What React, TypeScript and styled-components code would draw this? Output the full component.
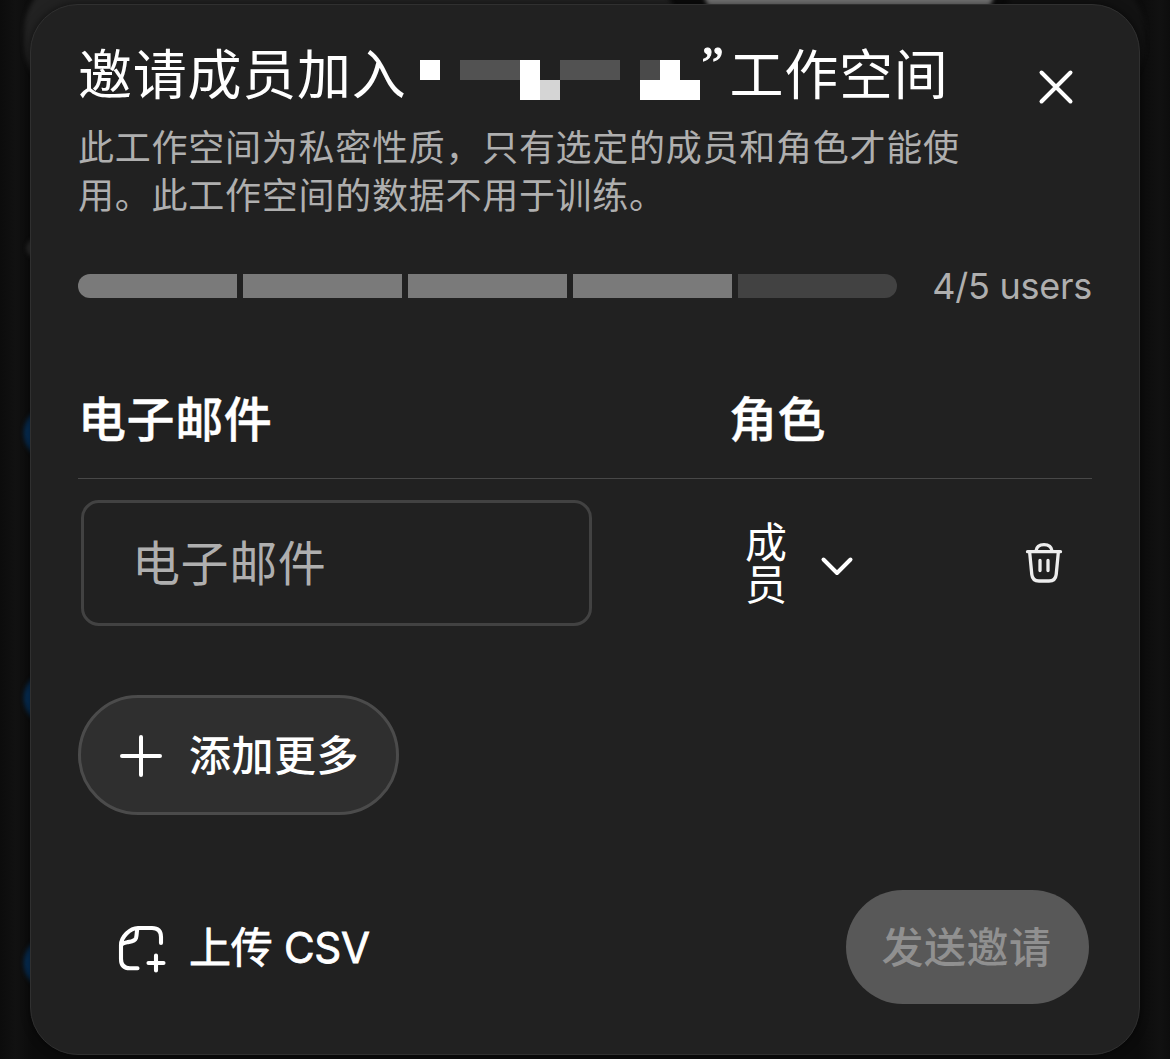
import React from 'react';
import styled, { createGlobalStyle } from 'styled-components';

const GlobalStyle = createGlobalStyle`
  * { box-sizing: border-box; }
  body {
    margin: 0;
    background: #0e0e0e;
    overflow: hidden;
    font-family: Inter, "Noto Sans CJK SC", sans-serif;
    color: #fff;
  }
  button, input { font: inherit; color: inherit; margin: 0; }
`;

const Page = styled.div`
  position: relative;
  width: 1170px;
  height: 1059px;
  padding: 4px 30px;
  overflow: hidden;
  background: linear-gradient(90deg, #0c0c0c 0, #111 16px, #0b0b0b 32px, #0b0b0b 1138px, #111 1160px, #0d0d0d 1170px);
`;

const Glow = styled.div<{ $x: number; $y: number; $w: number; $h: number; $color: string; $blur?: number }>`
  position: absolute;
  left: ${p => p.$x}px;
  top: ${p => p.$y}px;
  width: ${p => p.$w}px;
  height: ${p => p.$h}px;
  border-radius: ${p => Math.min(p.$h / 2, 60)}px;
  background: ${p => p.$color};
  filter: blur(${p => p.$blur ?? 2}px);
`;

const Dialog = styled.section`
  position: relative;
  display: flex;
  flex-direction: column;
  height: 1051px;
  padding: 34px 47px 50px;
  border: 1px solid #303030;
  border-radius: 48px;
  background: #212121;
  box-shadow: 0 0 8px rgba(0, 0, 0, 0.55);
`;

const Header = styled.header`
  display: flex;
  justify-content: space-between;
  height: 181px;
`;

const Title = styled.h1`
  display: flex;
  align-items: center;
  height: 74px;
  margin: 0;
  font-size: 54px;
  font-weight: 400;
  line-height: 72px;
  letter-spacing: 0.75px;
  white-space: nowrap;
`;

const Quote = styled.span`
  align-self: flex-start;
  width: 30px;
  padding-left: 2px;
  font-family: "Liberation Serif", serif;
  font-size: 50px;
  line-height: 50px;
  letter-spacing: 0;
  -webkit-text-stroke: 1px #fff;
`;

const Mosaic = styled.span`
  display: grid;
  grid-template-columns: repeat(14, 20px);
  grid-template-rows: 20px 20px;
  margin: 8px 0 0 13px;
`;

const Tile = styled.span<{ $row: number; $col: number; $span?: number; $tone: string }>`
  grid-row: ${p => p.$row};
  grid-column: ${p => p.$col} / span ${p => p.$span ?? 1};
  background: ${p => p.$tone};
`;

const Description = styled.p`
  width: 900px;
  margin: 11px 0 0;
  color: #afafaf;
  font-size: 36px;
  font-weight: 400;
  line-height: 48px;
  letter-spacing: 0.74px;
`;

const IconButton = styled.button`
  display: flex;
  align-items: center;
  justify-content: center;
  width: 60px;
  height: 60px;
  padding: 0;
  border: 0;
  background: none;
`;

const CloseButton = styled(IconButton)`
  margin: 18px 6px 0 0;
`;

const Usage = styled.div`
  display: flex;
  align-items: center;
  justify-content: space-between;
  height: 48px;
  margin-top: 42px;
`;

const Meter = styled.div`
  display: grid;
  flex: none;
  grid-template-columns: repeat(5, 159px);
  gap: 6px;
  height: 24px;
  overflow: hidden;
  border-radius: 12px;
`;

const Segment = styled.span<{ $used: boolean }>`
  background: ${p => (p.$used ? '#7a7a7a' : '#424242')};
`;

const UsageLabel = styled.span`
  color: #afafaf;
  font-size: 36px;
  line-height: 48px;
  letter-spacing: -0.25px;
  white-space: nowrap;
`;

const HeadRow = styled.div`
  display: grid;
  grid-template-columns: 651px 1fr;
  align-items: center;
  height: 119px;
  margin-top: 50px;
  padding-top: 2px;
  border-bottom: 1px solid #484848;
`;

const HeadCell = styled.span`
  font-size: 48px;
  font-weight: 500;
  line-height: 64px;
  letter-spacing: 0.6px;
  -webkit-text-stroke: 0.4px #fff;
`;

const MemberRow = styled.div`
  display: grid;
  grid-template-columns: 511px 108px 1fr 60px;
  align-items: center;
  height: 126px;
  margin: 21px 18px 0 3px;
`;

const EmailInput = styled.input`
  width: 511px;
  height: 126px;
  padding: 1px 49px 0 48px;
  border: 3px solid #424242;
  border-radius: 18px;
  background: transparent;
  font-size: 48px;
  letter-spacing: 0.6px;
  outline: 0;
  &::placeholder { color: #afafaf; opacity: 1; }
`;

const RoleSelect = styled.button`
  grid-column: 3;
  display: flex;
  align-items: center;
  justify-self: start;
  gap: 31px;
  padding: 1px 0 0;
  margin-left: 45px;
  border: 0;
  background: none;
  text-align: left;

  svg { margin-top: 5px; }
`;

const RoleName = styled.span`
  width: 43px;
  font-size: 42px;
  line-height: 42px;
  word-break: break-all;
`;

const AddButton = styled.button`
  display: flex;
  align-items: center;
  align-self: flex-start;
  gap: 24px;
  width: 321px;
  height: 120px;
  margin-top: 69px;
  padding: 2px 36px 0;
  border: 3px solid #4b4b4b;
  border-radius: 60px;
  background: #2f2f2f;
  white-space: nowrap;
`;

const ActionText = styled.span<{ $latin?: boolean }>`
  font-size: 42px;
  font-weight: ${p => (p.$latin ? 400 : 500)};
  line-height: 60px;
  letter-spacing: ${p => (p.$latin ? -0.3 : 0.5)}px;
  -webkit-text-stroke: ${p => (p.$latin ? '0.8px' : '0')} currentColor;
`;

const Footer = styled.footer`
  display: flex;
  align-items: center;
  justify-content: space-between;
  margin-top: auto;
  padding: 0 3px 0 39px;
`;

const UploadButton = styled.button`
  display: flex;
  align-items: center;
  gap: 22px;
  padding: 2px 0 0;
  border: 0;
  background: none;
`;

const SendButton = styled.button`
  width: 243px;
  height: 114px;
  padding: 2px 2px 0 0;
  border: 0;
  border-radius: 57px;
  background: #585858;
  color: #909090;
  white-space: nowrap;
`;

const tiles = [
  { row: 1, col: 1, tone: '#fff' },
  { row: 1, col: 3, span: 3, tone: '#525252' },
  { row: 1, col: 6, tone: '#fff' },
  { row: 1, col: 8, span: 3, tone: '#525252' },
  { row: 1, col: 12, tone: '#4a4a4a' },
  { row: 1, col: 13, tone: '#fff' },
  { row: 2, col: 6, tone: '#fff' },
  { row: 2, col: 7, tone: '#d5d5d5' },
  { row: 2, col: 12, span: 3, tone: '#fff' },
];

const stroke = { fill: 'none', stroke: 'currentColor', strokeLinecap: 'round', strokeLinejoin: 'round' } as const;

const CloseIcon = () => (
  <svg width="36" height="36" viewBox="0 0 36 36" {...stroke} strokeWidth="4">
    <path d="M3.5 3.5 32.5 32.5M32.5 3.5 3.5 32.5" />
  </svg>
);

const ChevronIcon = () => (
  <svg width="36" height="24" viewBox="0 0 36 24" {...stroke} strokeWidth="4">
    <path d="M4.5 5.5 18 19 31.5 5.5" />
  </svg>
);

const TrashIcon = () => (
  <svg width="40" height="44" viewBox="0 0 40 44" {...stroke} stroke="#ededed" strokeWidth="3.3">
    <path d="M3.5 10.7H36.5M5.6 10.7 7.8 33.5Q8.5 40 15 40H25Q31.500 40 32.200 33.500L34.400 10.700M12 10C12.500 6 15.500 3.700 20 3.700S27.500 6 28 10M16 19.500V29.500M24 19.500V29.500" />
  </svg>
);

const PlusIcon = () => (
  <svg width="48" height="48" viewBox="0 0 48 48" {...stroke} strokeWidth="4">
    <path d="M24 5V43M5 24H43" />
  </svg>
);

const FileAddIcon = () => (
  <svg width="50" height="50" viewBox="0 0 50 50" {...stroke} strokeWidth="4.1">
    <path d="M44 20V14Q44 5 35 5H21Q15 5 9.500 10.500Q4 16 4 22V36Q4 45.300 13 45.300H20.500M20.500 5.500C19.500 8 20 12 19 15C17.500 19 13 18.500 10 19.200C8 19.600 6 20 4.500 21.500M39 32.500V47.500M31.500 40H46.500" />
  </svg>
);

export default function App() {
  return (
    <>
      <GlobalStyle />
      <Page>
        <Glow $x={24} $y={-28} $w={655} $h={130} $color="#222" />
        <Glow $x={1000} $y={-28} $w={145} $h={130} $color="#121212" />
        <Glow $x={702} $y={-80} $w={294} $h={120} $color="#777" />
        <Glow $x={27} $y={238} $w={20} $h={20} $color="#303030" />
        {[406, 671, 936].map(y => (
          <Glow key={y} $x={24} $y={y} $w={54} $h={54} $color="#052f58" />
        ))}
        <Dialog role="dialog">
          <Header>
            <div>
              <Title>
                <span>邀请成员加入</span>
                <Mosaic>
                  {tiles.map(t => (
                    <Tile key={`${t.row}-${t.col}`} $row={t.row} $col={t.col} $span={t.span} $tone={t.tone} />
                  ))}
                </Mosaic>
                <Quote>”</Quote>
                <span>工作空间</span>
              </Title>
              <Description>此工作空间为私密性质，只有选定的成员和角色才能使用。此工作空间的数据不用于训练。</Description>
            </div>
            <CloseButton><CloseIcon /></CloseButton>
          </Header>
          <Usage>
            <Meter>
              {[0, 1, 2, 3, 4].map(i => <Segment key={i} $used={i < 4} />)}
            </Meter>
            <UsageLabel>4/5 users</UsageLabel>
          </Usage>
          <HeadRow>
            <HeadCell>电子邮件</HeadCell>
            <HeadCell>角色</HeadCell>
          </HeadRow>
          <MemberRow>
            <EmailInput placeholder="电子邮件" />
            <RoleSelect>
              <RoleName>成员</RoleName>
              <ChevronIcon />
            </RoleSelect>
            <IconButton><TrashIcon /></IconButton>
          </MemberRow>
          <AddButton>
            <PlusIcon />
            <ActionText>添加更多</ActionText>
          </AddButton>
          <Footer>
            <UploadButton>
              <FileAddIcon />
              <ActionText $latin>上传 CSV</ActionText>
            </UploadButton>
            <SendButton><ActionText>发送邀请</ActionText></SendButton>
          </Footer>
        </Dialog>
      </Page>
    </>
  );
}
